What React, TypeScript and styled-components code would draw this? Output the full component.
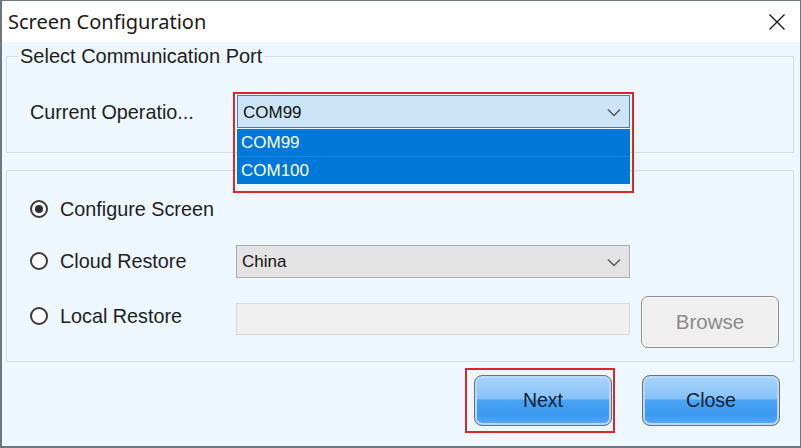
import React from "react";
import styled, { createGlobalStyle } from "styled-components";

const GlobalStyle = createGlobalStyle`
  html, body {
    margin: 0;
    padding: 0;
    background: #ffffff;
  }
  body {
    font-family: "Liberation Sans", Arial, sans-serif;
  }
`;

const Window = styled.div`
  width: 801px;
  height: 448px;
  box-sizing: border-box;
  border: 1px solid #6d7780;
  border-left-width: 2px;
  border-bottom-width: 2px;
  background: #eef6fe;
  display: flex;
  flex-direction: column;
  overflow: hidden;
`;

const TitleBar = styled.div`
  height: 41px;
  flex: none;
  background: #ffffff;
  display: flex;
  align-items: center;
  justify-content: space-between;
  padding: 0 14px 0 6px;
`;

const Title = styled.span`
  font-family: "Noto Sans", "Liberation Sans", sans-serif;
  font-size: 20px;
  color: #1a1a1a;
  margin-top: -1px;
`;

const CloseX = styled.svg`
  width: 18px;
  height: 18px;
`;

const Body = styled.div`
  flex: 1;
  display: flex;
  flex-direction: column;
  padding: 3px 6px 0 4px;
`;

const Group = styled.fieldset<{ $pad: string; $gap?: number }>`
  margin: ${(p) => p.$gap ?? 0}px 0 0 0;
  padding: ${(p) => p.$pad};
  border: 1px solid #d4dde6;
  border-radius: 1px;
  min-width: 0;
`;

const Legend = styled.legend`
  font-size: 20px;
  line-height: 22px;
  color: #1e1e1e;
  padding: 0 2px;
  margin-left: -12px;
`;

const PortRow = styled.div`
  display: flex;
  align-items: center;
`;

const Label = styled.span`
  font-size: 19.8px;
  line-height: 22px;
  color: #1e1e1e;
`;

const PortLabel = styled(Label)`
  width: 207px;
  flex: none;
`;

const ComboWrap = styled.div`
  position: relative;
  width: 393px;
`;

const Combo = styled.div<{ $open?: boolean; $width?: number }>`
  width: ${(p) => (p.$width ? `${p.$width}px` : "auto")};
  height: 33px;
  box-sizing: border-box;
  border: 1px solid ${(p) => (p.$open ? "#3a82c4" : "#acacac")};
  background: ${(p) => (p.$open ? "#cce4f7" : "#e3e3e3")};
  display: flex;
  align-items: center;
  justify-content: space-between;
  padding: 2px 8px 0 5px;
  font-size: 17px;
  color: #111;
`;

const Chevron = styled.svg`
  width: 14px;
  height: 9px;
`;

const DropList = styled.div`
  position: absolute;
  left: 0;
  right: 0;
  top: 34px;
  background: #0078d7;
  z-index: 2;
`;

const DropItem = styled.div`
  height: 26px;
  display: flex;
  align-items: center;
  padding-left: 4px;
  padding-top: 1px;
  font-size: 17px;
  color: #ffffff;
  & + & {
    border-top: 1px solid #1886dc;
  }
`;

const Highlight = styled.div<{ $t: number; $r: number; $b: number; $l: number }>`
  position: absolute;
  top: ${(p) => p.$t}px;
  right: ${(p) => p.$r}px;
  bottom: ${(p) => p.$b}px;
  left: ${(p) => p.$l}px;
  border: 2px solid #d8282c;
  pointer-events: none;
  z-index: 3;
`;

const OptionGrid = styled.div`
  display: flex;
  flex-direction: column;
  gap: 18px;
`;

const OptionRow = styled.div<{ $h: number }>`
  height: ${(p) => p.$h}px;
  display: flex;
  align-items: center;
`;

const RadioLabel = styled.label<{ $shift?: number }>`
  width: 206px;
  flex: none;
  display: flex;
  align-items: center;
  gap: 12px;
  margin-top: ${(p) => p.$shift ?? 0}px;
`;

const RadioDot = styled.span<{ $checked?: boolean }>`
  width: 18px;
  height: 18px;
  flex: none;
  box-sizing: border-box;
  border-radius: 50%;
  border: 2px solid #3a3a3a;
  background: #fff;
  display: flex;
  align-items: center;
  justify-content: center;
  &::after {
    content: "";
    width: 8px;
    height: 8px;
    border-radius: 50%;
    background: #2e2e2e;
    display: ${(p) => (p.$checked ? "block" : "none")};
  }
`;

const PathBox = styled.div`
  width: 394px;
  height: 32px;
  box-sizing: border-box;
  border: 1px solid #d9d9d9;
  background: #f0f0f0;
  margin-top: -6px;
`;

const BrowseButton = styled.button`
  width: 138px;
  height: 52px;
  margin-left: 11px;
  border: 1px solid #8d8d8d;
  border-radius: 7px;
  background: #efefef;
  box-shadow: inset 0 0 0 1px #fafafa;
  font-family: "Liberation Sans", Arial, sans-serif;
  font-size: 20.5px;
  color: #8a8a8a;
`;

const Footer = styled.div`
  display: flex;
  justify-content: flex-end;
  align-items: center;
  gap: 27px;
  padding: 6px 14px 0 0;
`;

const NextFrame = styled.div`
  border: 2px solid #d8282c;
  padding: 5px 1px 5px 7px;
  display: flex;
`;

const GlossButton = styled.button`
  width: 138px;
  height: 51px;
  border: 1px solid #6c7176;
  border-radius: 8px;
  box-shadow: inset 0 0 0 2px #b9d8f2;
  background: linear-gradient(
    to bottom,
    #a8d4fa 0%,
    #86c2f7 46%,
    #4aa3f3 50%,
    #3b99f1 80%,
    #58acf5 100%
  );
  font-family: "Liberation Sans", Arial, sans-serif;
  font-size: 19.5px;
  color: #0f1e33;
  padding: 0;
`;

export default function App() {
  return (
    <>
      <GlobalStyle />
      <Window>
        <TitleBar>
          <Title>Screen Configuration</Title>
          <CloseX viewBox="0 0 18 18">
            <path d="M1.5 1.5 L16.5 16.5 M16.5 1.5 L1.5 16.5" stroke="#1a1a1a" strokeWidth="1.4" />
          </CloseX>
        </TitleBar>
        <Body>
          <Group $pad="28px 22px 24px 23px">
            <Legend>Select Communication Port</Legend>
            <PortRow>
              <PortLabel>Current Operatio...</PortLabel>
              <ComboWrap>
                <Combo $open>
                  <span>COM99</span>
                  <Chevron viewBox="0 0 14 9">
                    <path d="M1 1.5 L7 7.5 L13 1.5" stroke="#555" strokeWidth="1.4" fill="none" />
                  </Chevron>
                </Combo>
                <DropList>
                  <DropItem>COM99</DropItem>
                  <DropItem>COM100</DropItem>
                </DropList>
                <Highlight $t={-3} $l={-4} $r={-4} $b={-65} />
              </ComboWrap>
            </PortRow>
          </Group>

          <Group $pad="21px 12px 13px 23px" $gap={17}>
            <OptionGrid>
              <OptionRow $h={34}>
                <RadioLabel>
                  <RadioDot $checked />
                  <Label>Configure Screen</Label>
                </RadioLabel>
              </OptionRow>
              <OptionRow $h={34}>
                <RadioLabel>
                  <RadioDot />
                  <Label>Cloud Restore</Label>
                </RadioLabel>
                <Combo $width={394}>
                  <span>China</span>
                  <Chevron viewBox="0 0 14 9">
                    <path d="M1 1.5 L7 7.5 L13 1.5" stroke="#555" strokeWidth="1.4" fill="none" />
                  </Chevron>
                </Combo>
              </OptionRow>
              <OptionRow $h={52}>
                <RadioLabel $shift={-13}>
                  <RadioDot />
                  <Label>Local Restore</Label>
                </RadioLabel>
                <PathBox />
                <BrowseButton>Browse</BrowseButton>
              </OptionRow>
            </OptionGrid>
          </Group>

          <Footer>
            <NextFrame>
              <GlossButton>Next</GlossButton>
            </NextFrame>
            <GlossButton>Close</GlossButton>
          </Footer>
        </Body>
      </Window>
    </>
  );
}
